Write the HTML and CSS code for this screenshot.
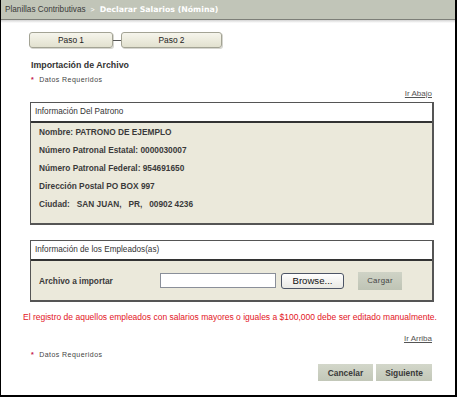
FILE: index.html
```html
<!DOCTYPE html>
<html>
<head>
<meta charset="utf-8">
<link rel="stylesheet" href="styles.css">
</head>
<body>
<div class="frame">
  <div class="topbar">
    <span class="crumb">Planillas Contributivas</span>
    <span class="sep">&gt;</span>
    <span class="current">Declarar Salarios (Nómina)</span>
  </div>
  <div class="shadow"></div>
  <div class="content">
    <div class="steps">
      <div class="step step1">Paso 1</div>
      <div class="connector"></div>
      <div class="step step2">Paso 2</div>
    </div>
    <div class="title">Importación de Archivo</div>
    <div class="req"><span class="star">*</span>Datos Requeridos</div>
    <div class="link-row"><a class="link">Ir Abajo</a></div>
    <div class="panel">
      <div class="panel-head">Información Del Patrono</div>
      <div class="panel-body info">
        <div class="row">Nombre: PATRONO DE EJEMPLO</div>
        <div class="row">Número Patronal Estatal: 0000030007</div>
        <div class="row">Número Patronal Federal: 954691650</div>
        <div class="row">Dirección Postal PO BOX 997</div>
        <div class="row">Ciudad:&nbsp;&nbsp; SAN JUAN,&nbsp;&nbsp; PR,&nbsp;&nbsp; 00902 4236</div>
      </div>
    </div>
    <div class="panel panel2">
      <div class="panel-head">Información de los Empleados(as)</div>
      <div class="panel-body upload">
        <span class="label">Archivo a importar</span>
        <span class="file-input"></span>
        <span class="browse">Browse...</span>
        <span class="cargar">Cargar</span>
      </div>
    </div>
    <div class="warning">El registro de aquellos empleados con salarios mayores o iguales a $100,000 debe ser editado manualmente.</div>
    <div class="link-row link-row2"><a class="link">Ir Arriba</a></div>
    <div class="req req2"><span class="star">*</span>Datos Requeridos</div>
    <div class="actions">
      <span class="btn btn-cancel">Cancelar</span>
      <span class="btn btn-next">Siguiente</span>
    </div>
  </div>
</div>
</body>
</html>
```
FILE: styles.css
```css
html, body {
  margin: 0;
  padding: 0;
  background: #ffffff;
}
body {
  font-family: "Liberation Sans", Arial, sans-serif;
  color: #333333;
}
.frame {
  box-sizing: border-box;
  width: 457px;
  height: 397px;
  border-left: 1px solid #000;
  border-right: 2px solid #000;
  border-bottom: 2px solid #000;
  overflow: hidden;
}
.topbar {
  height: 19px;
  background: #c1c5b8;
  border-bottom: 1px solid #7d7f78;
  display: flex;
  align-items: center;
  padding-left: 4px;
  font-size: 8.2px;
  white-space: nowrap;
}
.crumb { color: #3b3b3b; }
.sep { color: #ffffff; margin: 0 5px; font-size: 7px; }
.current {
  color: #ffffff;
  font-weight: bold;
  font-family: "DejaVu Sans", Verdana, sans-serif;
  font-size: 7.8px;
}
.shadow {
  height: 3px;
  background: linear-gradient(#d4d4d4, #ffffff);
}
.content {
  padding-left: 28px;
  padding-right: 22px;
}
.steps {
  display: flex;
  align-items: center;
  margin-top: 9px;
  height: 16px;
}
.step {
  box-sizing: border-box;
  height: 16px;
  border: 1px solid #a3a394;
  border-radius: 3px;
  background: linear-gradient(#f6f5ec, #e2e1cf);
  box-shadow: 1px 1px 0 #d6d6d0;
  font-size: 8.4px;
  color: #222;
  display: flex;
  align-items: center;
  justify-content: center;
}
.step1 { width: 84px; }
.step2 { width: 101px; }
.connector {
  width: 8px;
  height: 1px;
  background: #555;
}
.title {
  margin-top: 11px;
  margin-left: 2px;
  height: 12px;
  line-height: 12px;
  font-size: 8.8px;
  font-weight: bold;
  color: #333;
}
.req {
  margin-top: 3px;
  margin-left: 2px;
  height: 12px;
  line-height: 12px;
  font-size: 7px;
  letter-spacing: 0.45px;
  color: #444;
}
.star {
  color: #c4204a;
  font-weight: bold;
  margin-right: 5px;
}
.link-row {
  display: flex;
  justify-content: flex-end;
  height: 12px;
  line-height: 12px;
  margin-top: 2px;
  margin-right: 1px;
}
.link {
  font-size: 8px;
  color: #555;
  text-decoration: underline;
}
.panel {
  margin-top: 2px;
  width: 404px;
  margin-left: 1px;
  box-sizing: border-box;
  border: 1px solid #555;
  border-right-width: 2px;
  border-bottom-width: 2px;
}
.panel2 { margin-top: 15px; }
.panel-head {
  height: 18px;
  line-height: 18px;
  background: #ffffff;
  border-bottom: 2px solid #333;
  padding-left: 4px;
  font-size: 8.2px;
  color: #333;
}
.panel-body {
  background: #ebe9db;
}
.info {
  padding: 0 0 10px 8px;
}
.row {
  height: 18px;
  line-height: 18px;
  font-size: 8.3px;
  font-weight: bold;
  color: #3a3a3a;
  white-space: pre;
}
.upload {
  height: 39px;
  display: flex;
  align-items: center;
  padding-left: 8px;
}
.label {
  font-size: 8.3px;
  font-weight: bold;
  color: #3a3a3a;
  width: 121px;
}
.file-input {
  box-sizing: border-box;
  width: 116px;
  height: 15px;
  background: #fff;
  border: 1px solid #8a8f99;
}
.browse {
  box-sizing: border-box;
  margin-left: 5px;
  width: 63px;
  height: 16px;
  border: 1px solid #4d5566;
  border-radius: 3px;
  background: linear-gradient(#ffffff, #e9e9e4);
  font-size: 9.6px;
  color: #111;
  display: flex;
  align-items: center;
  justify-content: center;
}
.cargar {
  margin-left: 14px;
  width: 44px;
  height: 18px;
  background: linear-gradient(#cfd3c6, #bfc4b5);
  font-size: 7.8px;
  color: #444;
  letter-spacing: 0.3px;
  display: flex;
  align-items: center;
  justify-content: center;
}
.warning {
  margin-top: 9px;
  margin-left: -6px;
  height: 12px;
  line-height: 12px;
  font-size: 8.5px;
  color: #e3141e;
  white-space: nowrap;
}
.link-row2 { margin-top: 10px; }
.req2 { margin-top: 4px; }
.actions {
  display: flex;
  justify-content: flex-end;
  gap: 3px;
  margin-top: 3px;
  margin-right: 1px;
}
.btn {
  height: 17px;
  background: linear-gradient(#d3d7ca, #c2c7b8);
  font-size: 8.4px;
  font-weight: bold;
  color: #3a3a3a;
  display: flex;
  align-items: center;
  justify-content: center;
}
.btn-cancel { width: 55px; }
.btn-next { width: 56px; }
```
